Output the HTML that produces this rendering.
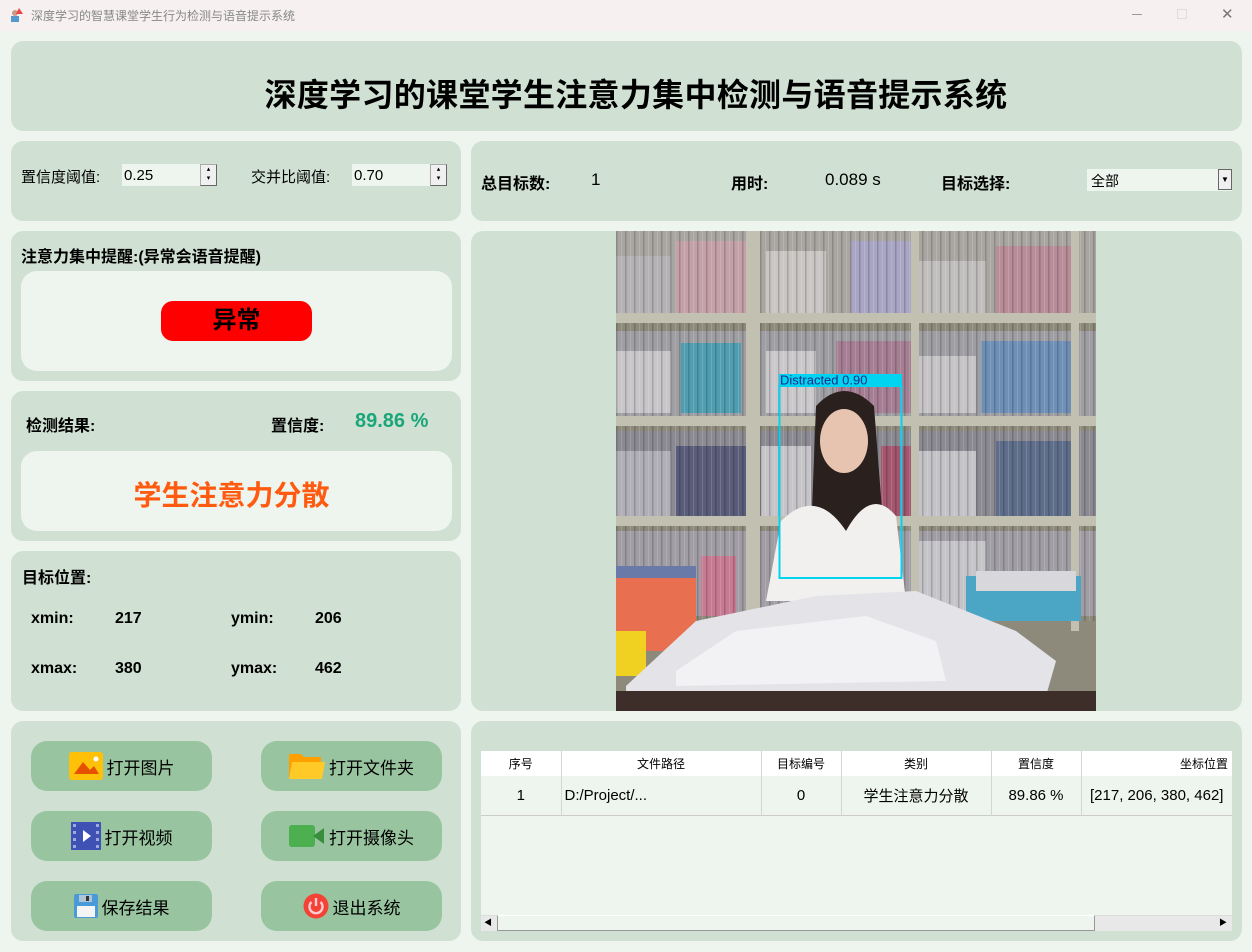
<!DOCTYPE html>
<html><head><meta charset="utf-8"><style>
*{margin:0;padding:0;box-sizing:border-box}
body{width:1252px;height:952px;background:#eef5ee;font-family:"Liberation Sans","Noto Sans CJK SC",sans-serif;position:relative;overflow:hidden;color:#000}
.a{position:absolute}
.p{position:absolute;background:#d0e1d3;border-radius:12px}
.w{position:absolute;background:#eef5ee;border-radius:16px}
.b{font-weight:bold}
.btn{position:absolute;background:#98c59f;border-radius:16px;width:181px;height:50px;font-size:17px;display:flex;align-items:center;justify-content:center;gap:4px}
.spin{position:absolute;width:95px;height:22px;background:#eef5ee;font-size:15px;padding:3px 0 0 2px}
.spin i{position:absolute;right:0;top:0;width:17px;height:22px;background:#f0f0f0;border:1px solid #aaa;border-right-color:#666;border-bottom-color:#666;font-style:normal;font-size:7px;line-height:9px;text-align:center}
td,th{font-weight:normal;text-align:center;border-right:1px solid #d5d5d5}
</style></head><body>
<div class="a" style="left:0;top:0;width:1252px;height:31px;background:#f6f0f0"></div>
<div class="a" style="left:9px;top:8px;width:14px;height:14px;"><svg width="14" height="14"><circle cx="6" cy="5" r="3" fill="#c98"/><rect x="2" y="8" width="8" height="6" fill="#59c"/><polygon points="10,0 14,6 7,6" fill="#e44"/></svg></div>
<div class="a" style="left:31px;top:7px;font-size:12px;color:#888">深度学习的智慧课堂学生行为检测与语音提示系统</div>
<div class="a" style="left:1132px;top:14px;width:10px;height:1px;background:#999"></div>
<div class="a" style="left:1177px;top:9px;width:10px;height:10px;border:1px solid #ddd"></div>
<div class="a" style="left:1221px;top:5px;font-size:15px;color:#777">✕</div>

<div class="p" style="left:11px;top:41px;width:1231px;height:90px"></div>
<div class="a b" style="left:11px;top:70px;width:1250px;text-align:center;font-size:32px;letter-spacing:0.3px">深度学习的课堂学生注意力集中检测与语音提示系统</div>

<div class="p" style="left:11px;top:141px;width:450px;height:80px"></div>
<div class="a" style="left:21px;top:166px;font-size:15px">置信度阈值:</div>
<div class="spin" style="left:122px;top:164px">0.25<i>▴<br>▾</i></div>
<div class="a" style="left:251px;top:166px;font-size:15px">交并比阈值:</div>
<div class="spin" style="left:352px;top:164px">0.70<i>▴<br>▾</i></div>

<div class="p" style="left:471px;top:141px;width:771px;height:80px"></div>
<div class="a b" style="left:481px;top:170px;font-size:16px">总目标数:</div>
<div class="a" style="left:591px;top:170px;font-size:17px">1</div>
<div class="a b" style="left:731px;top:170px;font-size:16px">用时:</div>
<div class="a" style="left:825px;top:170px;font-size:17px">0.089 s</div>
<div class="a b" style="left:941px;top:170px;font-size:16px">目标选择:</div>
<div class="a" style="left:1087px;top:169px;width:145px;height:22px;background:#eef5ee;font-size:14px;padding:2px 4px">全部<span style="position:absolute;right:0;top:0;width:14px;height:21px;background:#f0f0f0;border:1px solid #666;font-size:8px;line-height:19px;text-align:center">▼</span></div>

<div class="p" style="left:11px;top:231px;width:450px;height:150px"></div>
<div class="a b" style="left:21px;top:243px;font-size:16px">注意力集中提醒:(异常会语音提醒)</div>
<div class="w" style="left:21px;top:271px;width:431px;height:100px"></div>
<div class="a b" style="left:161px;top:301px;width:151px;height:40px;background:#f00;border-radius:12px;text-align:center;font-size:24px;line-height:40px">异常</div>

<div class="p" style="left:11px;top:391px;width:450px;height:150px"></div>
<div class="a b" style="left:26px;top:412px;font-size:16px">检测结果:</div>
<div class="a b" style="left:271px;top:412px;font-size:16px">置信度:</div>
<div class="a b" style="left:355px;top:410px;font-size:20px;color:#1aa67a">89.86 %</div>
<div class="w" style="left:21px;top:451px;width:431px;height:80px"></div>
<div class="a b" style="left:21px;top:474px;width:421px;text-align:center;font-size:28px;color:#ff5a0f">学生注意力分散</div>

<div class="p" style="left:11px;top:551px;width:450px;height:160px"></div>
<div class="a b" style="left:22px;top:564px;font-size:16px">目标位置:</div>
<div class="a b" style="left:31px;top:610px;font-size:16px">xmin:</div>
<div class="a b" style="left:115px;top:610px;font-size:16px">217</div>
<div class="a b" style="left:231px;top:610px;font-size:16px">ymin:</div>
<div class="a b" style="left:315px;top:610px;font-size:16px">206</div>
<div class="a b" style="left:31px;top:660px;font-size:16px">xmax:</div>
<div class="a b" style="left:115px;top:660px;font-size:16px">380</div>
<div class="a b" style="left:231px;top:660px;font-size:16px">ymax:</div>
<div class="a b" style="left:315px;top:660px;font-size:16px">462</div>

<div class="p" style="left:471px;top:231px;width:771px;height:480px"></div>
<svg class="a" style="left:616px;top:231px" width="480" height="480" viewBox="0 0 480 480">
<defs><pattern id="bk" width="9" height="10" patternUnits="userSpaceOnUse"><rect width="9" height="10" fill="none"/><rect x="0" width="1.5" height="10" fill="#000" opacity="0.18"/><rect x="5" width="1" height="10" fill="#fff" opacity="0.15"/></pattern></defs>
<rect width="480" height="480" fill="#8d8a7c"/>
<rect y="0" width="480" height="90" fill="#a9a6a2"/>
<rect x="60" y="10" width="70" height="72" fill="#c4a0a8"/><rect x="235" y="10" width="60" height="72" fill="#a8a6c4"/><rect x="380" y="15" width="75" height="67" fill="#b88c98"/><rect x="150" y="20" width="60" height="62" fill="#c9c6c4"/><rect x="0" y="25" width="55" height="57" fill="#b4b2b4"/><rect x="300" y="30" width="70" height="52" fill="#c1bfbe"/>
<rect y="100" width="480" height="85" fill="#9f9ea3"/>
<rect x="65" y="112" width="60" height="70" fill="#4f9db0"/><rect x="0" y="120" width="55" height="62" fill="#c8c6c8"/><rect x="150" y="120" width="50" height="62" fill="#cbc8cb"/><rect x="220" y="110" width="75" height="72" fill="#a57e93"/><rect x="365" y="110" width="90" height="72" fill="#6e8fb6"/><rect x="300" y="125" width="60" height="57" fill="#c6c4c6"/>
<rect y="200" width="480" height="88" fill="#8b8a92"/>
<rect x="60" y="215" width="70" height="70" fill="#5a5d7a"/><rect x="0" y="220" width="55" height="65" fill="#b0aeb6"/><rect x="265" y="215" width="35" height="70" fill="#a3566d"/><rect x="300" y="220" width="60" height="65" fill="#c4c3c8"/><rect x="380" y="210" width="80" height="75" fill="#5e6e8a"/><rect x="145" y="215" width="50" height="70" fill="#c6c4c8"/>
<rect y="300" width="480" height="85" fill="#a09ea4"/><rect x="300" y="310" width="70" height="75" fill="#c5c4c8"/><rect x="85" y="325" width="35" height="60" fill="#c77a92"/>
<rect width="480" height="390" fill="url(#bk)"/>
<g fill="#c2c0b0"><rect y="82" width="480" height="10"/><rect y="185" width="480" height="10"/><rect y="285" width="480" height="10"/><rect x="130" y="0" width="14" height="400"/><rect x="295" y="0" width="8" height="400"/><rect x="455" y="0" width="8" height="400"/></g>
<path d="M200 175 Q228 145 258 175 L268 305 L195 305 Z" fill="#2a211e"/>
<ellipse cx="228" cy="210" rx="24" ry="32" fill="#e6c4b0"/>
<path d="M150 370 L165 290 Q200 255 230 300 Q255 255 280 285 L290 370 Z" fill="#f2f0ee"/>
<path d="M0 340 L80 340 L80 420 L0 420 Z" fill="#e87050"/><rect x="0" y="335" width="80" height="12" fill="#6a7aa8"/>
<path d="M350 345 L465 345 L465 390 L350 390 Z" fill="#4aa6c4"/><rect x="360" y="340" width="100" height="20" fill="#d8d8dc"/>
<rect y="400" width="30" height="45" fill="#f0d020"/>
<path d="M10 455 L80 390 L200 365 L300 360 L400 400 L440 430 L430 465 L10 465 Z" fill="#e4e4e8"/>
<path d="M60 440 L120 400 L250 385 L320 410 L330 450 L60 455 Z" fill="#f2f2f4"/>
<rect y="460" width="480" height="20" fill="#3e2e2a"/>
<rect x="163" y="143" width="123" height="12" fill="#00d4f0"/>
<rect x="163.5" y="155" width="122" height="192" fill="none" stroke="#00d4f0" stroke-width="2"/>
<text x="164" y="153.5" font-family="Liberation Sans,sans-serif" font-size="13" fill="#1a2a8a">Distracted  0.90</text>
</svg>

<div class="p" style="left:11px;top:721px;width:450px;height:220px"></div>
<div class="btn" style="left:31px;top:741px"><svg width="34" height="28"><rect width="34" height="28" rx="3" fill="#ffc107"/><path d="M5 22 L14 10 L21 18 L25 14 L30 22Z" fill="#e65100"/><circle cx="27" cy="7" r="2.5" fill="#fff"/></svg>打开图片</div>
<div class="btn" style="left:261px;top:741px"><svg width="36" height="28"><path d="M0 2 H12 L15 5 H32 V26 H0Z" fill="#ffa000"/><path d="M3 10 H36 L33 27 H0Z" fill="#ffca28"/></svg>打开文件夹</div>
<div class="btn" style="left:31px;top:811px"><svg width="30" height="28"><rect width="30" height="28" fill="#3f51b5"/><g fill="#9fa8da"><rect x="2" y="2" width="3" height="3"/><rect x="2" y="9" width="3" height="3"/><rect x="2" y="16" width="3" height="3"/><rect x="2" y="23" width="3" height="3"/><rect x="25" y="2" width="3" height="3"/><rect x="25" y="9" width="3" height="3"/><rect x="25" y="16" width="3" height="3"/><rect x="25" y="23" width="3" height="3"/></g><path d="M12 8 L20 14 L12 20Z" fill="#fff"/></svg>打开视频</div>
<div class="btn" style="left:261px;top:811px"><svg width="36" height="22"><rect width="26" height="22" rx="3" fill="#4caf50"/><path d="M24 11 L35 3 V19Z" fill="#388e3c"/></svg>打开摄像头</div>
<div class="btn" style="left:31px;top:881px"><svg width="24" height="24"><rect width="24" height="24" rx="2" fill="#4a9ad8"/><rect x="5" y="1" width="13" height="7" fill="#b0c4d8"/><rect x="12" y="2" width="3" height="5" fill="#333"/><rect x="3" y="12" width="18" height="11" fill="#f4f4f4"/></svg>保存结果</div>
<div class="btn" style="left:261px;top:881px"><svg width="26" height="26"><circle cx="13" cy="13" r="12.5" fill="#f44336"/><path d="M8.5 9 A6.5 6.5 0 1 0 17.5 9" fill="none" stroke="#ffcdd2" stroke-width="2.4"/><line x1="13" y1="5" x2="13" y2="13" stroke="#ffcdd2" stroke-width="2.4"/></svg>退出系统</div>

<div class="p" style="left:471px;top:721px;width:771px;height:220px"></div>
<div class="a" style="left:481px;top:751px;width:751px;height:180px;background:#eef5ee"></div>
<table class="a" style="left:481px;top:751px;width:751px;border-collapse:collapse;table-layout:fixed;font-size:12px">
<tr style="height:25px;background:#fff"><th style="width:80px">序号</th><th style="width:200px">文件路径</th><th style="width:80px">目标编号</th><th style="width:150px">类别</th><th style="width:90px">置信度</th><th style="width:151px;text-align:right;padding-right:4px;border:none">坐标位置</th></tr>
<tr style="height:39px;font-size:15px;border-bottom:1px solid #ccc"><td>1</td><td style="text-align:left;padding-left:3px">D:/Project/...</td><td>0</td><td>学生注意力分散</td><td>89.86 %</td><td style="border:none">[217, 206, 380, 462]</td></tr>
</table>
<div class="a" style="left:481px;top:915px;width:751px;height:16px;background:#e8e8e8;border-top:1px solid #ddd"></div>
<div class="a" style="left:497px;top:915px;width:598px;height:16px;background:#eef5ee;border:1px solid #999;border-top:1px solid #fff"></div>
<div class="a" style="left:484px;top:917px;font-size:8px">◀</div>
<div class="a" style="left:1219px;top:917px;font-size:8px">▶</div>
</body></html>
